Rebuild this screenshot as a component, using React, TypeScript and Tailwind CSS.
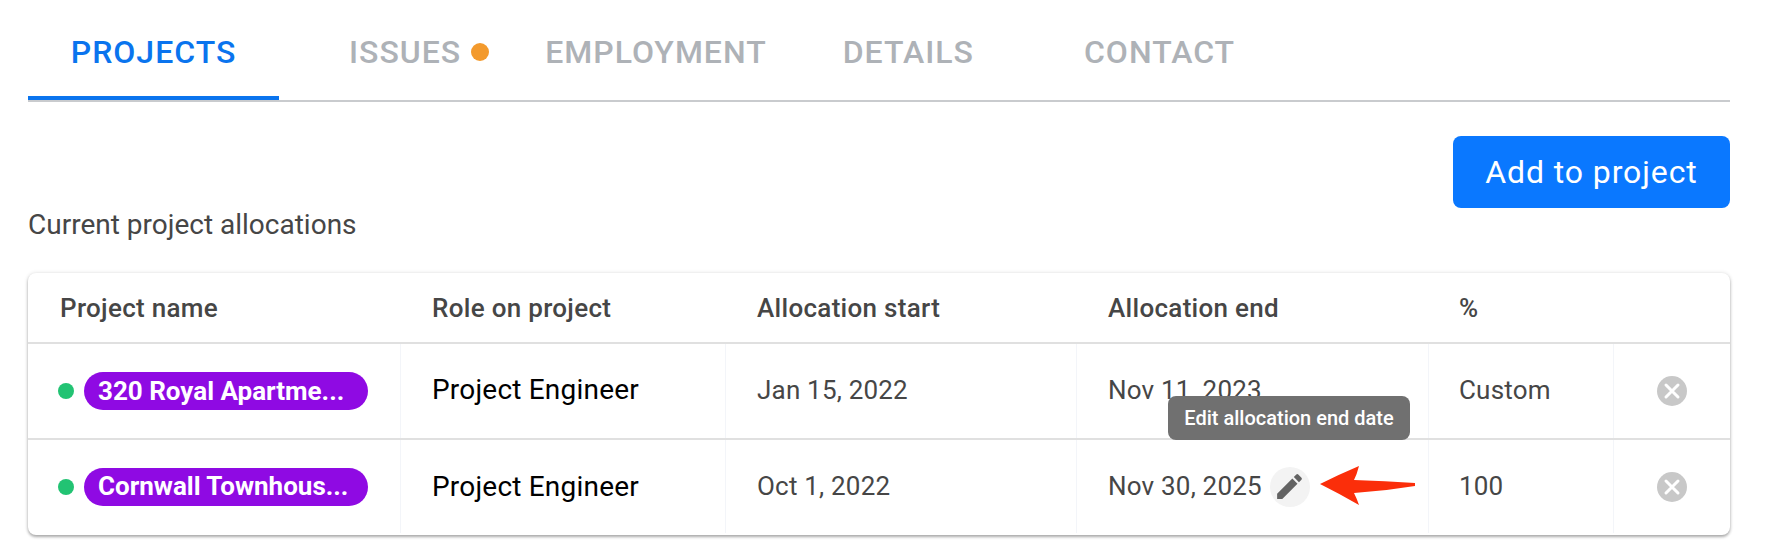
import React from 'react';

const tabs = [
  { label: 'PROJECTS', cls: 'w-[251px] justify-center pt-[8px] text-[#0a74ee] border-b-4 border-[#0a74ee]' },
  { label: 'ISSUES', cls: 'pl-[70px] pt-[4px] text-[#aeb2b7]', dot: true },
  { label: 'EMPLOYMENT', cls: 'pl-[56px] pt-[4px] text-[#aeb2b7]' },
  { label: 'DETAILS', cls: 'pl-[76px] pt-[4px] text-[#aeb2b7]' },
  { label: 'CONTACT', cls: 'pl-[110px] pt-[4px] text-[#aeb2b7]' },
];

const columns = [
  { label: 'Project name', cls: 'w-[373px] pl-[32px]' },
  { label: 'Role on project', cls: 'w-[325px] pl-[31px]' },
  { label: 'Allocation start', cls: 'w-[351px] pl-[31px]' },
  { label: 'Allocation end', cls: 'w-[352px] pl-[31px]' },
  { label: '%', cls: 'w-[185px] pl-[30px]' },
];

const rows = [
  { name: '320 Royal Apartme...', start: 'Jan 15, 2022', end: 'Nov 11, 2023', pct: 'Custom', h: 'h-[96px] border-b-2 border-[#e0e0e0]', txt: 'pb-[2px]' },
  { name: 'Cornwall Townhous...', start: 'Oct 1, 2022', end: 'Nov 30, 2025', pct: '100', h: 'h-[95px] pb-[2px]', txt: '', edit: true },
];

const cell = 'h-full flex items-center border-r border-[#f3f5f9] shrink-0';

const App: React.FC = () => {
  return (
    <div className="w-[1780px] h-[556px] bg-white overflow-hidden font-['Roboto',sans-serif] text-[#464646] px-[28px]">
      <div className="w-[1702px]">
        {/* Tabs */}
        <div className="flex h-[102px] border-b-2 border-[#c9cbce]">
          {tabs.map((t) => (
            <div
              key={t.label}
              className={`${t.cls} h-[100px] flex items-center text-[32px] font-medium tracking-[1px]`}
            >
              {t.label}
              {t.dot && <span className="ml-[10px] w-[18px] h-[18px] rounded-full bg-[#f39a2d]" />}
            </div>
          ))}
        </div>

        {/* Add button + heading */}
        <div className="flex justify-end pt-[34px]">
          <button className="w-[277px] h-[72px] rounded-[8px] bg-[#0a78ff] text-white text-[32px] tracking-[0.9px]">
            Add to project
          </button>
        </div>
        <div className="mt-[1px] mb-[32px] text-[28px] leading-[32px]">Current project allocations</div>

        {/* Table */}
        <div className="relative rounded-[8px] bg-white shadow-[0_2px_3px_rgba(0,0,0,0.3),0_0_4px_rgba(0,0,0,0.12)]">
          <div className="flex h-[71px] items-center pt-[2px] border-b-2 border-[#e0e0e0]">
            {columns.map((c) => (
              <div key={c.label} className={`${c.cls} shrink-0 text-[26px] font-medium tracking-[0.3px]`}>
                {c.label}
              </div>
            ))}
          </div>
          {rows.map((r) => (
            <div key={r.name} className={`flex ${r.h}`}>
              <div className={`${cell} w-[373px] pl-[30px] gap-[10px]`}>
                <span className="w-[16px] h-[16px] rounded-full bg-[#22c373]" />
                <span className="w-[284px] h-[38px] flex items-center rounded-full bg-[#8f0ae3] pl-[14px] text-white text-[26px] font-bold whitespace-nowrap">
                  {r.name}
                </span>
              </div>
              <div className={`${cell} ${r.txt} w-[325px] pl-[31px] text-[28px] tracking-[0.2px] text-black`}>Project Engineer</div>
              <div className={`${cell} ${r.txt} w-[351px] pl-[31px] text-[26px] tracking-[0.2px]`}>{r.start}</div>
              <div className={`${cell} ${r.txt} w-[352px] pl-[31px] text-[26px] tracking-[0.2px]`}>
                {r.end}
                {r.edit && (
                  <span className="ml-[8px] w-[40px] h-[40px] rounded-full bg-[#f3f3f3] flex items-center justify-center">
                    <svg viewBox="0 0 24 24" className="w-[33px] h-[33px] fill-[#636363]">
                      <path d="M3 17.25V21h3.75L17.81 9.94l-3.75-3.75L3 17.25zM20.71 7.04a1 1 0 0 0 0-1.41l-2.34-2.34a1 1 0 0 0-1.41 0l-1.83 1.83 3.75 3.75 1.83-1.83z" />
                    </svg>
                  </span>
                )}
              </div>
              <div className={`${cell} ${r.txt} w-[185px] pl-[30px] text-[26px] tracking-[0.2px]`}>{r.pct}</div>
              <div className="h-full flex-1 flex items-center justify-center">
                <svg viewBox="0 0 30 30" className="w-[30px] h-[30px]">
                  <circle cx="15" cy="15" r="15" fill="#c8c8c8" />
                  <path d="M9 9l12 12M21 9L9 21" stroke="#fff" strokeWidth="3" strokeLinecap="round" />
                </svg>
              </div>
            </div>
          ))}

          {/* Tooltip over the rows */}
          <div className="absolute left-[1140px] top-[123px] w-[242px] h-[44px] rounded-[8px] bg-[#707070] text-white text-[20px] font-medium flex items-center justify-center">
            Edit allocation end date
          </div>

          {/* Annotation arrow */}
          <svg viewBox="0 0 96 40" className="absolute left-[1292px] top-[193px] w-[96px] h-[40px]">
            <path d="M0 18 Q20 8 39 0 Q37 8 34 14 Q65 15 95 17 L95 20 Q65 25 34 27 Q37 33 39 39 Q20 28 0 18 Z" fill="#fb2e0a" />
          </svg>
        </div>
      </div>
    </div>
  );
};

export default App;
